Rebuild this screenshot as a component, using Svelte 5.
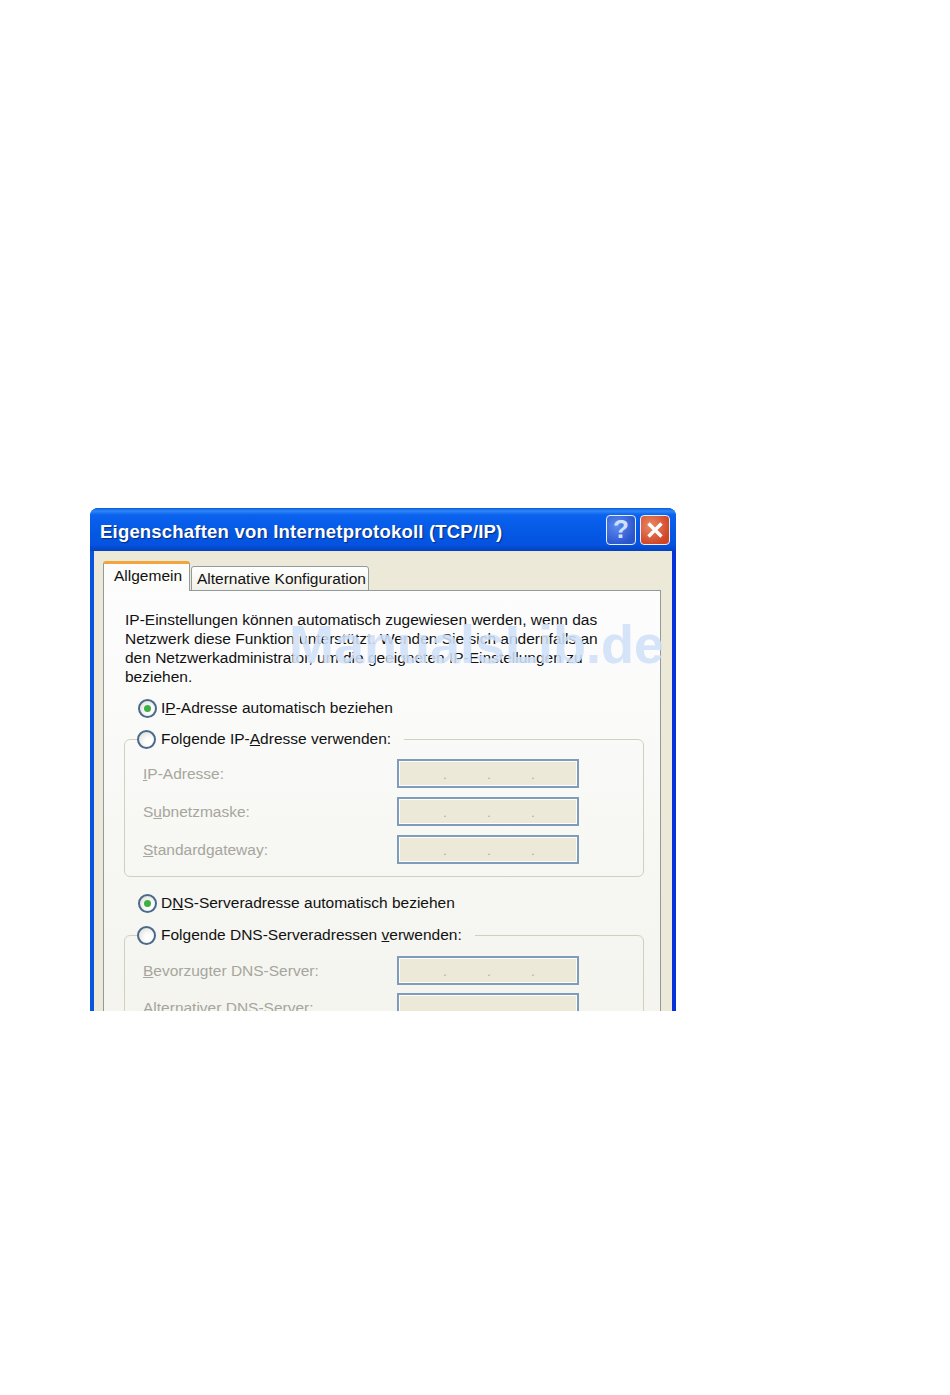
<script>
  // XP style TCP/IP properties dialog, cut off at the bottom like the scan
  const introLines = [
    'IP-Einstellungen können automatisch zugewiesen werden, wenn das',
    'Netzwerk diese Funktion unterstützt. Wenden Sie sich andernfalls an',
    'den Netzwerkadministrator, um die geeigneten IP-Einstellungen zu',
    'beziehen.'
  ];

  const ipFields = [
    { pre: '', key: 'I', post: 'P-Adresse:' },
    { pre: 'S', key: 'u', post: 'bnetzmaske:' },
    { pre: '', key: 'S', post: 'tandardgateway:' }
  ];

  const dnsFields = [
    { pre: '', key: 'B', post: 'evorzugter DNS-Server:' },
    { pre: '', key: 'A', post: 'lternativer DNS-Server:' }
  ];
</script>

{#snippet radio(checked)}
  <span class="radio" class:checked></span>
{/snippet}

{#snippet field(f)}
  <div class="field-row">
    <span class="field-label">{f.pre}<u>{f.key}</u>{f.post}</span>
    <div class="ip-input">
      <span>.</span><span>.</span><span>.</span>
    </div>
  </div>
{/snippet}

<div class="page">
  <div class="window">
    <div class="titlebar">
      <span class="title">Eigenschaften von Internetprotokoll (TCP/IP)</span>
      <div class="title-buttons">
        <button class="tb-btn help">?</button>
        <button class="tb-btn close" aria-label="Schließen">
          <svg width="20" height="20" viewBox="0 0 20 20">
            <path d="M3.5 3.5 L16.5 16.5 M16.5 3.5 L3.5 16.5" stroke="#fff" stroke-width="3.4" fill="none" />
          </svg>
        </button>
      </div>
    </div>

    <div class="body">
      <div class="tabs">
        <div class="tab active">Allgemein</div>
        <div class="tab">Alternative Konfiguration</div>
      </div>

      <div class="panel">
        <p class="intro">
          {#each introLines as line}
            <span>{line}</span>
          {/each}
        </p>

        <div class="radio-row first">
          {@render radio(true)}
          <span>I<u>P</u>-Adresse automatisch beziehen</span>
        </div>

        <fieldset class="group ip-group">
          <legend>
            {@render radio(false)}
            <span>Folgende IP-<u>A</u>dresse verwenden:</span>
          </legend>
          {#each ipFields as f}
            {@render field(f)}
          {/each}
        </fieldset>

        <div class="radio-row second">
          {@render radio(true)}
          <span>D<u>N</u>S-Serveradresse automatisch beziehen</span>
        </div>

        <fieldset class="group dns-group">
          <legend>
            {@render radio(false)}
            <span>Folgende DNS-Serveradressen <u>v</u>erwenden:</span>
          </legend>
          {#each dnsFields as f}
            {@render field(f)}
          {/each}
        </fieldset>

        <div class="watermark">ManualsLib.de</div>
      </div>
    </div>
  </div>
</div>

<style>
  :global(body) {
    margin: 0;
    background: #fff;
  }

  .page {
    height: 1395px;
    padding: 508px 0 0 90px;
    box-sizing: border-box;
    font-family: 'Liberation Sans', Arial, sans-serif;
    font-size: 15.5px;
    color: #111;
  }

  .window {
    width: 586px;
    height: 503px;
    overflow: hidden;
    border-radius: 8px 8px 0 0;
    display: flex;
    flex-direction: column;
    background: linear-gradient(90deg, #0855dd 0%, #0855dd 50%, #0831d9 100%);
  }

  .titlebar {
    flex: 0 0 43px;
    display: flex;
    align-items: center;
    justify-content: space-between;
    padding: 0 6px 0 10px;
    background: linear-gradient(180deg, #0a5be0 0%, #2f86f5 7%, #0a62ee 16%, #0458e4 60%, #0553e0 85%, #0242c0 100%);
  }

  .title {
    padding-top: 5px;
    font-family: 'Liberation Sans', sans-serif;
    font-weight: 700;
    font-size: 18.5px;
    letter-spacing: 0.2px;
    color: #fff;
    text-shadow: 1px 1px 1px #0a2a80;
    white-space: nowrap;
  }

  .title-buttons {
    display: flex;
    gap: 4px;
  }

  .tb-btn {
    width: 30px;
    height: 30px;
    padding: 0;
    border: 1px solid #e8eefc;
    border-radius: 4px;
    display: flex;
    align-items: center;
    justify-content: center;
    color: #fff;
    font-family: 'Liberation Sans', sans-serif;
    font-weight: 700;
    font-size: 26px;
  }

  .help {
    background: radial-gradient(circle at 35% 35%, #5d8cf0, #2a55cc 75%);
    color: #cfe0ff;
  }

  .close {
    background: radial-gradient(circle at 35% 35%, #ea8a66, #cf4525 75%);
  }

  .body {
    flex: 1;
    margin: 0 4px;
    padding: 10px 11px 0 9px;
    background: #ece9d8;
    min-height: 0;
  }

  .tabs {
    display: flex;
    align-items: flex-end;
    height: 30px;
    gap: 1px;
    position: relative;
    z-index: 1;
    margin-bottom: -1px;
  }

  .tab {
    height: 25px;
    padding: 0 3px 0 5px;
    width: 178px;
    box-sizing: border-box;
    line-height: 23px;
    white-space: nowrap;
    background: linear-gradient(180deg, #fff, #f1f0e8);
    border: 1px solid #919b9c;
    border-radius: 3px 3px 0 0;
  }

  .tab.active {
    width: 87px;
    height: 30px;
    padding: 0 0 0 10px;
    line-height: 23px;
    background: #fcfcfb;
    border: 1px solid #919b9c;
    border-top: 3px solid #f2a53c;
    border-bottom: 0;
  }

  .panel {
    position: relative;
    height: 600px;
    box-sizing: border-box;
    padding: 19px 20px 0 20px;
    background: linear-gradient(180deg, #fdfdfe 0%, #f6f6f2 50%, #f3f2ec 100%);
    border: 1px solid #919b9c;
    border-bottom: 0;
  }

  .intro {
    margin: 0 0 0 1px;
    line-height: 19px;
  }

  .intro span {
    display: block;
    white-space: nowrap;
  }

  .radio-row {
    display: flex;
    align-items: center;
    gap: 4px;
    margin-left: 14px;
    height: 22px;
  }

  .radio-row.first { margin-top: 11px; }
  .radio-row.second { margin-top: 15px; }

  .radio {
    flex: none;
    box-sizing: border-box;
    width: 19px;
    height: 19px;
    border-radius: 50%;
    border: 2px solid #4a6a8c;
    background: radial-gradient(circle at 65% 65%, #fff 25%, #d8d8d0 100%);
    position: relative;
    display: inline-block;
  }

  .radio.checked::after {
    content: '';
    position: absolute;
    inset: 4px;
    border-radius: 50%;
    background: #3cb043;
  }

  .group {
    margin: 0;
    padding: 0 0 0 18px;
    border: 1px solid #d0d0bf;
    border-radius: 6px;
    min-width: 0;
    box-sizing: border-box;
    width: 520px;
  }

  .ip-group {
    height: 149px;
    margin-top: 9px;
  }

  .dns-group {
    height: 149px;
    margin-top: 10px;
  }

  .group legend {
    margin-left: -6px;
    padding: 0 13px 0 0;
    height: 22px;
    display: flex;
    align-items: center;
    gap: 5px;
  }

  .field-row {
    display: flex;
    align-items: center;
    justify-content: space-between;
    width: 436px;
    height: 29px;
    margin-bottom: 9px;
  }

  .field-row:first-of-type {
    margin-top: 9px;
  }

  .dns-group .field-row {
    margin-bottom: 8px;
  }

  .dns-group .field-row:first-of-type {
    margin-top: 10px;
  }

  .field-label {
    color: #a6a69c;
    white-space: nowrap;
  }

  .ip-input {
    width: 182px;
    height: 29px;
    box-sizing: border-box;
    border: 2px solid #7f9db9;
    box-shadow: inset 0 0 0 1px #fff;
    background: #ece9d8;
    display: grid;
    grid-template-columns: repeat(3, 44px);
    justify-content: center;
    padding-left: 2px;
    color: #a8a89a;
    font-size: 12px;
    line-height: 29px;
    text-align: center;
  }

  .watermark {
    position: absolute;
    left: 185px;
    top: 23px;
    font-family: 'Liberation Sans', sans-serif;
    font-weight: 700;
    font-size: 54px;
    line-height: 60px;
    white-space: nowrap;
    color: rgba(207, 224, 247, 0.88);
  }
</style>
